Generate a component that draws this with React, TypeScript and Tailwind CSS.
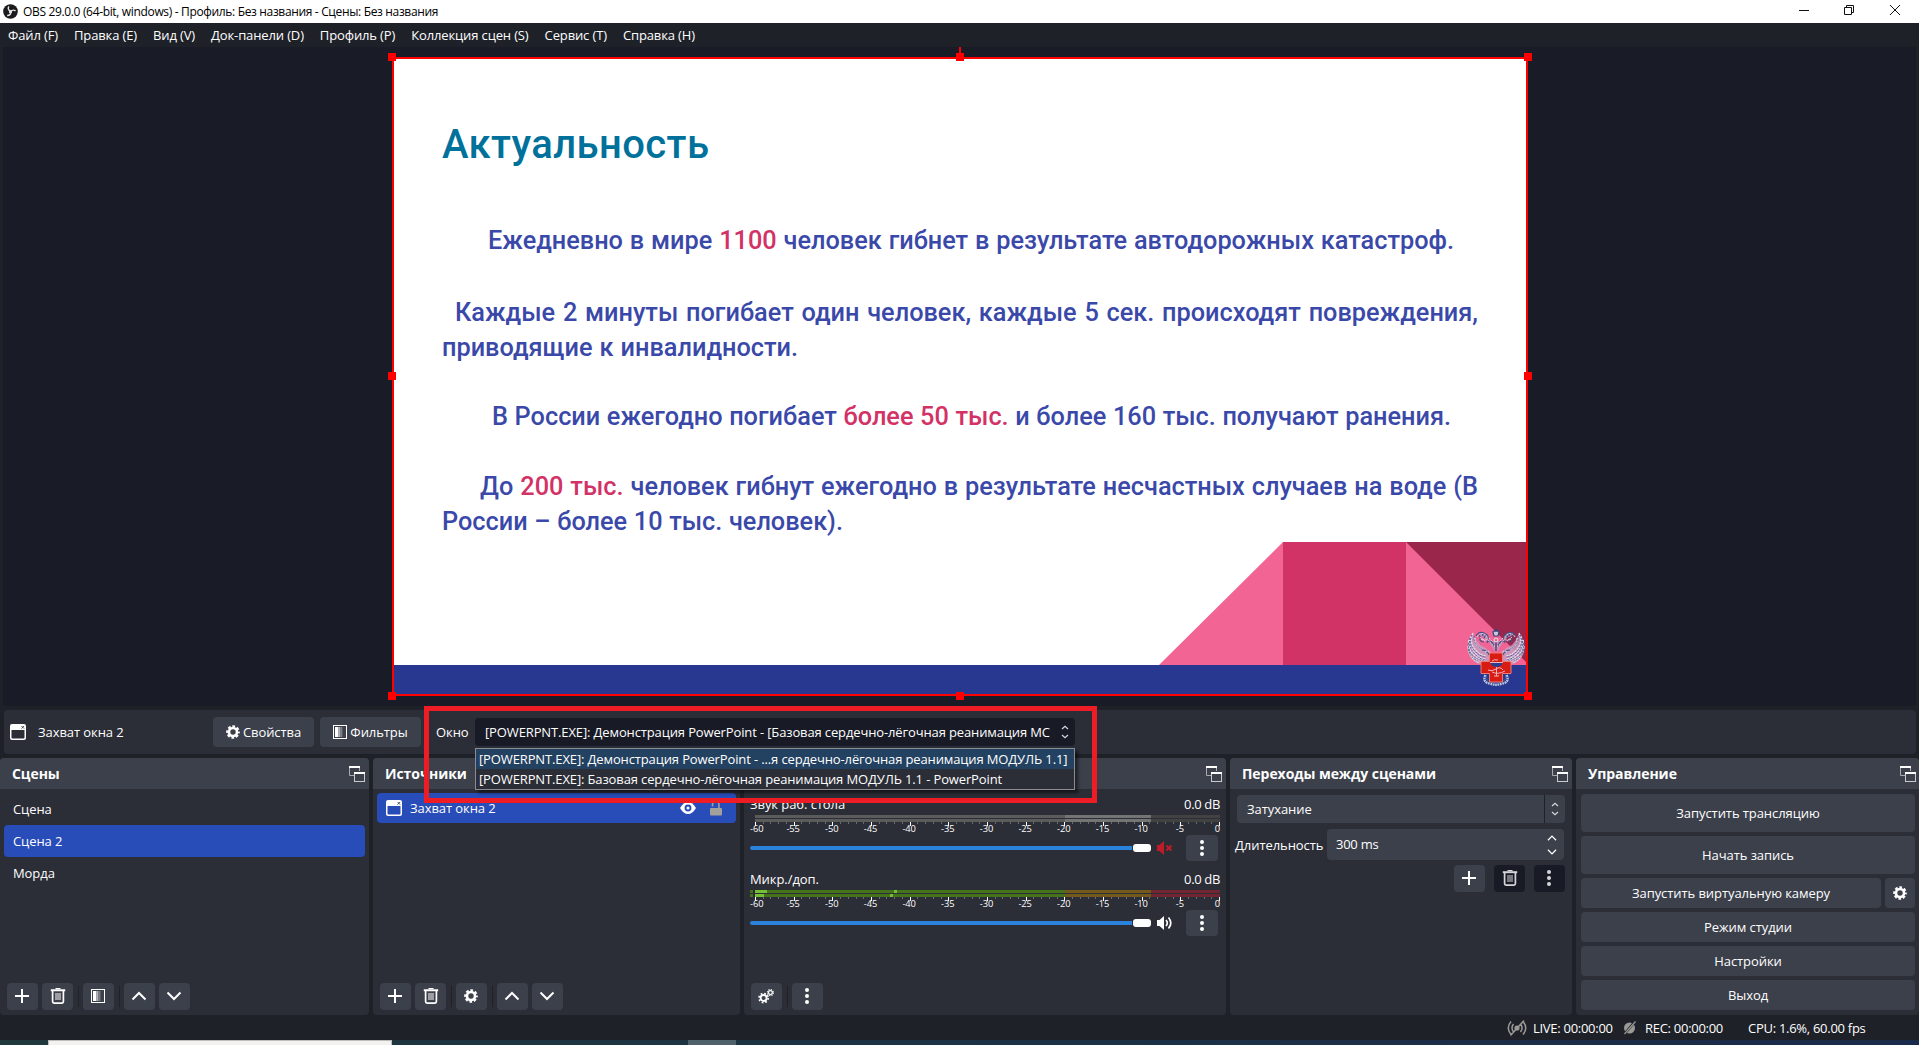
import React from "react";

type P = { className?: string };

const Gear = ({ className = "" }: P) => (
  <svg viewBox="0 0 16 16" className={className} fill="none">
    <circle cx="8" cy="8" r="4.6" stroke="#fefefe" strokeWidth="3" />
    <circle cx="8" cy="8" r="6.5" stroke="#fefefe" strokeWidth="2.6" strokeDasharray="3 2.105" strokeDashoffset="1.5" />
  </svg>
);

const Gears = () => (
  <svg viewBox="0 0 16 16" className="size-4" fill="none" stroke="#fefefe">
    <circle cx="5.6" cy="10" r="3" strokeWidth="1.8" />
    <circle cx="5.6" cy="10" r="4.6" strokeWidth="1.6" strokeDasharray="1.8 1.813" />
    <circle cx="12.4" cy="4.6" r="1.9" strokeWidth="1.2" />
    <circle cx="12.4" cy="4.6" r="3" strokeWidth="1.2" strokeDasharray="1.2 1.156" />
  </svg>
);

const Plus = () => (
  <svg viewBox="0 0 16 16" className="size-4" stroke="#fefefe" strokeWidth="2">
    <path d="M8 1v14M1 8h14" />
  </svg>
);

const Trash = () => (
  <svg viewBox="0 0 16 16" className="ml-px size-4" fill="none" stroke="currentColor">
    <path d="M0.8 2.2h14.4" strokeWidth="2" />
    <path d="M5.500 0.600h5" strokeWidth="1.2" />
    <path d="M2.600 3v10.600q0 1.500 1.500 1.500h7.800q1.500 0 1.500-1.500V3" strokeWidth="1.7" />
    <path d="M6 5v7M8 5v7M10 5v7" strokeWidth="1" />
  </svg>
);

const Filter = () => (
  <svg viewBox="0 0 14 14" className="size-3.5" fill="none">
    <rect x="0.5" y="0.5" width="13" height="13" stroke="#fefefe" />
    <rect x="2" y="2" width="3.4" height="10" fill="#fefefe" />
    <rect x="5.4" y="2" width="2" height="10" fill="#b4b5b9" />
    <rect x="7.4" y="2" width="2" height="10" fill="#7d7f87" />
  </svg>
);

const Up = ({ className = "size-4" }: P) => (
  <svg viewBox="0 0 16 16" className={className} fill="none" stroke="#fefefe" strokeWidth="2">
    <path d="M1.500 11.500 8 5l6.500 6.500" />
  </svg>
);
const Down = ({ className = "size-4" }: P) => (
  <svg viewBox="0 0 16 16" className={className} fill="none" stroke="#fefefe" strokeWidth="2">
    <path d="M1.500 4.500 8 11l6.500-6.500" />
  </svg>
);

const Dots = () => (
  <svg viewBox="0 0 16 16" className="size-4" fill="currentColor">
    <circle cx="8" cy="2" r="2" />
    <circle cx="8" cy="8" r="2" />
    <circle cx="8" cy="14" r="2" />
  </svg>
);

const WindowIcon = () => (
  <svg viewBox="0 0 16 16" className="size-4 shrink-0">
    <path fillRule="evenodd" d="M2 0h12q2 0 2 2v12q0 2-2 2H2q-2 0-2-2V2Q0 0 2 0ZM1.500 6v7.500q0 1 1 1h11q1 0 1-1V6Z" fill="#fefefe" />
    <path d="m11.500 2 2.600 2.600m0-2.600-2.600 2.600" stroke="#3c404b" strokeWidth="0.9" />
  </svg>
);

const Undock = () => (
  <svg viewBox="0 0 16 16" className="size-4" fill="none">
    <path d="M0.500 1v8.500H5M10.500 5V1" stroke="#a9abb0" />
    <path d="M0 1h11" stroke="#fefefe" strokeWidth="2" />
    <rect x="5.500" y="7" width="10" height="8.500" stroke="#c9cacd" />
    <path d="M5 7h11" stroke="#fefefe" strokeWidth="2" />
  </svg>
);

const Spin = () => (
  <svg viewBox="0 0 8 14" className="h-3.5 w-2" fill="none" stroke="#d5d6d9" strokeWidth="1.2">
    <path d="M1 4 4 1.200 7 4M1 10l3 2.800L7 10" />
  </svg>
);

const ToolBtn = ({ children, dark }: { children: React.ReactNode; dark?: boolean }) => (
  <button className={(dark ? "bg-[#181a25] text-[#d5d6d9]" : "bg-[#3c404b] text-[#fefefe]") + " flex h-[27px] w-[31px] items-center justify-center rounded pr-px pb-px"}>
    {children}
  </button>
);
const Sep = () => <div className="mx-[4.5px] h-[21px] w-px bg-[#1f2129]" />;

const Dock = ({ title, className, pad = "pr-1", children }: { title: string; className: string; pad?: string; children: React.ReactNode }) => (
  <section className={"flex h-[257px] shrink-0 flex-col overflow-hidden rounded bg-[#2b2d37] " + className}>
    <header className={"flex h-[31px] shrink-0 items-center justify-between bg-[#3c404b] pl-3 " + pad}>
      <h2 className="text-[14px] font-bold tracking-[-0.06px]">{title}</h2>
      <Undock />
    </header>
    {children}
  </section>
);

const STEP = 464 / 60;

const Meter = ({ live }: { live?: boolean }) => (
  <svg width="471" height="20" viewBox="0 0 471 20" className="block shrink-0" shapeRendering="crispEdges">
    {[0, 4].map((y) => (
      <g key={y}>
        <rect x="5" y={y} width="310" height="3" fill={live ? "#44731b" : "#5b5b5c"} />
        <rect x="315" y={y} width="86" height="3" fill={live ? "#74591d" : "#747475"} />
        <rect x="401" y={y} width="69" height="3" fill={live ? "#722533" : "#424243"} />
        {live && <rect x="0" y={y} width="3" height="3" fill="#44731b" />}
        {live && <rect x="5" y={y} width={y ? 9 : 12} height="3" fill="#74c034" />}
        {live && <rect x={y ? 140 : 144} y={y} width="3" height="3" fill="#74c034" />}
      </g>
    ))}
    {Array.from({ length: 61 }, (_, i) => (
      <rect key={i} x={Math.round(5 + i * STEP)} y="7" width="1" height={i % 5 ? 2 : 4} fill={i % 5 ? "#6b6c70" : "#fefefe"} />
    ))}
    {Array.from({ length: 13 }, (_, i) => (
      <text
        key={i}
        x={i === 0 ? 0 : i === 12 ? 470 : 4.5 + i * 5 * STEP}
        y="17"
        textAnchor={i === 0 ? "start" : i === 12 ? "end" : "middle"}
        className="fill-[#fefefe] text-[9.3px]"
      >
        {i * 5 - 60}
      </text>
    ))}
  </svg>
);

const Channel = ({ name, muted }: { name: string; muted?: boolean }) => (
  <div className="flex h-[75px] flex-col pl-1.5">
    <div className="flex h-[21px] w-[470px] items-center justify-between pb-px">
      <span>{name}</span>
      <span className="tracking-[-0.35px]">0.0 dB</span>
    </div>
    <Meter live={!muted} />
    <div className="flex h-[26px] w-[468px] items-center">
      <div className="h-1 w-[382px] rounded-l-sm bg-[#2a82da]" />
      <div className="ml-px h-2 w-[18px] rounded-[3px] bg-[#fefefe]" />
      <svg viewBox="0 0 16 16" className="ml-1.5 size-4" fill="none">
        <path d="M0 5h2.500L7 1v14l-4.500-4H0Z" fill={muted ? "#c01c28" : "#fefefe"} />
        {muted ? (
          <path d="m9.500 5.500 5 5m0-5-5 5" stroke="#c01c28" strokeWidth="2" />
        ) : (
          <path d="M9 5q2.600 3 0 6M11.500 2.500q4.600 5.500 0 11" stroke="#fefefe" strokeWidth="1.7" />
        )}
      </svg>
      <div className="grow" />
      <button className="flex h-[26px] w-8 items-center justify-center rounded bg-[#3c404b] text-[#fefefe]">
        <Dots />
      </button>
    </div>
  </div>
);

const EagleHalf = () => (
  <>
    <path d="M6 5Q0 12 1 22q1 9 11 14l9-2 3-9-3-4-8-4-4-5Z" fill="#c79cc0" fillOpacity=".85" />
    <path d="M12 7q5-5 9 1l2 8 5 8v-12l-3 2Z" fill="#b79cc0" fillOpacity=".7" />
    <path
      d="M6 5Q2 13 7 20t12 8M4 8Q1 17 7 24t12 7M2 12q-2 9 5 15t12 6M1 18q0 9 8 13t10 3M2 24q2 7 10 11M8 10q-1 6 4 9t8 6"
      stroke="#e4dcea"
      strokeWidth="1.3"
      strokeDasharray="2.4 .7"
    />
    <path
      d="M5 7Q1 15 7 22t12 7M3 10q-2 8 4 15t12 7M1.500 15q-1 9 6 14t11 4M1.500 21q1 8 9 12M7 8q-1 7 5 11t8 6"
      stroke="#4a5990"
      strokeWidth=".9"
      strokeDasharray="2 1"
    />
    <path d="M9 8q3-5 8-3t4 6l-1 4M12 7q2 2 1 4t4 3M15 4l1 4M19 6l-2 4M21 13q4 1 6 4M15 22q5 0 7 5M24 12l3 6" stroke="#3f4f86" strokeWidth="1.100" />
    <path d="M10 9q3-5 7-3t3 6M13 9q3 3 6 3t5 3 4 3M18 24q3-2 6 1M14 11l4 2M22 10l4 4" stroke="#ddd7e6" strokeWidth="1" strokeDasharray="2 .8" />
    <path d="m18 19 3-1.500 2 2-2 2ZM20 22h3" fill="#f26494" stroke="#f26494" strokeWidth=".6" />
    <path d="M18.500 47q-3 6 2 8 3 1 9 2" stroke="#b9c5dc" strokeWidth="2.400" strokeDasharray="1.800 .7" />
    <path d="M19 48q0 6 9 7" stroke="#5d74a6" strokeWidth="1" strokeDasharray="2 1" />
  </>
);

const Emblem = () => (
  <svg viewBox="0 0 58 58" className="absolute top-[571px] left-[1075px] size-[58px]" fill="none">
    <EagleHalf />
    <g transform="matrix(-1 0 0 1 58 0)">
      <EagleHalf />
    </g>
    <path d="M26 4q3-3 6 0l-1 4h-4ZM29 0v4M29 14v9" stroke="#34457a" strokeWidth="1.200" fill="#c9c8dc" />
    <circle cx="29" cy="12" r="2" fill="#f26494" stroke="#e6e3ee" />
    <path d="M22.500 25h13v8.500H44v12h-8.500V54h-13v-8.500H14v-12h8.500Z" fill="#d81c12" stroke="#ee7a78" strokeWidth="1" />
    <path d="M23.500 35h12q-1 4-6 4t-6-4" fill="#2a3e8f" />
    <path d="M23 34.500h13M29.500 39v9M27 48h5M25 33q2-2 6-1M21 42q4 2 8-1t7 1M25 44q6 3 13-1" stroke="#f0b5c0" strokeWidth="1" />
  </svg>
);

const handles = [
  "left-[-4px] top-[-4px]",
  "left-[564px] top-[-4px]",
  "left-[1132px] top-[-4px]",
  "left-[-4px] top-[315px]",
  "left-[1132px] top-[315px]",
  "left-[-4px] top-[635px]",
  "left-[564px] top-[635px]",
  "left-[1132px] top-[635px]",
];

const Red = ({ children }: { children: React.ReactNode }) => <span className="text-[#d23265]">{children}</span>;

const Slide = () => (
  <div className="relative ml-[389px] mt-2.5 h-[639px] w-[1136px] bg-white font-['Roboto'] font-medium tracking-normal">
    <div className="flex flex-col pl-[50px] pt-16 text-[25.3px] leading-[35px] text-[#3a49a9] [&>p]:[text-align-last:justify] [&>p]:whitespace-nowrap">
      <h1 className="h-12 text-[40px] leading-[48px] tracking-[0.4px] text-[#00719b]">Актуальность</h1>
      <p className="mt-[54px] ml-[46px] w-[966px]">
        Ежедневно в мире <Red>1100</Red> человек гибнет в результате автодорожных катастроф.
      </p>
      <p className="mt-[37px] ml-[13px] w-[1023px]">Каждые 2 минуты погибает один человек, каждые 5 сек. происходят повреждения,</p>
      <p className="w-[356px]">приводящие к инвалидности.</p>
      <p className="mt-[34px] ml-[50px] w-[959px]">
        В России ежегодно погибает <Red>более 50 тыс.</Red> и более 160 тыс. получают ранения.
      </p>
      <p className="mt-[35px] ml-[38px] w-[998px]">
        До <Red>200 тыс.</Red> человек гибнут ежегодно в результате несчастных случаев на воде (В
      </p>
      <p className="w-[401px]">России – более 10 тыс. человек).</p>
    </div>
    <svg viewBox="0 0 1136 154" className="absolute bottom-0 left-0 h-[154px] w-[1136px]">
      <path d="M767 123 891 0v123Z" fill="#f26494" />
      <path d="M891 0h123v123H891Z" fill="#d13366" />
      <path d="M1014 0h122v123h-122Z" fill="#f26494" />
      <path d="M1014 0h122v122Z" fill="#9b264c" />
      <path d="M0 123h1136v31H0Z" fill="#283891" />
    </svg>
    <Emblem />
    <div className="absolute inset-0 border-2 border-[#ff0000]" />
    <div className="absolute left-[567px] top-[-10px] h-2.5 w-0.5 bg-[#ff0000]" />
    {handles.map((h) => (
      <div key={h} className={"absolute size-2 bg-[#ff0000] " + h} />
    ))}
  </div>
);

const CtlBtn = ({ label, className }: { label: string; className: string }) => (
  <button className={"flex items-center justify-center rounded bg-[#3c404b] " + className}>{label}</button>
);

export default function App() {
  return (
    <div className="relative flex h-[1045px] w-[1919px] flex-col overflow-hidden bg-[#1f2129] font-['Open_Sans',sans-serif] text-[13px] leading-[18px] tracking-[-0.07px] text-[#fefefe]">
      <div className="flex h-[23px] shrink-0 items-center bg-white pl-[3px] text-[12px] text-black">
        <svg viewBox="0 0 16 16" className="size-[15px]">
          <circle cx="8" cy="8" r="7.8" fill="#1b1b1d" />
          <g fill="none" stroke="#e6e6e8" strokeWidth="1.5">
            <path d="M6.200 2.600q-1.800 3.600 1.800 5.100" />
            <path d="M13.400 7.200q-3.500-1.800-5.200 1.200" />
            <path d="M4.400 12.300q3.700.2 4-3.600" />
          </g>
          <circle cx="8" cy="8.200" r="1.700" fill="#e6e6e8" />
        </svg>
        <span className="ml-[5px] tracking-[-0.34px]">OBS 29.0.0 (64-bit, windows) - Профиль: Без названия - Сцены: Без названия</span>
        <div className="grow" />
        <svg viewBox="0 0 104 13" className="mr-[18px] h-[13px] w-[104px]" fill="none" stroke="#111">
          <path d="M2 5.500h10M47.500 2.500h7v7h-7zM49.500 2.500v-2h7v7h-2M93 0l10 10M103 0 93 10" />
        </svg>
      </div>
      <nav className="flex h-6 shrink-0 items-center gap-4 pl-2 pb-px">
        {["Файл (F)", "Правка (E)", "Вид (V)", "Док-панели (D)", "Профиль (P)", "Коллекция сцен (S)", "Сервис (T)", "Справка (H)"].map((m) => (
          <span key={m} className="tracking-[-0.13px]">{m}</span>
        ))}
      </nav>

      <main className="mx-[3px] h-[659px] shrink-0 bg-[#191b26]">
        <Slide />
      </main>

      <div className="relative z-10 mt-1 ml-1 mr-[3px] flex h-11 shrink-0 items-center rounded bg-[#2b2d37] pl-1.5">
        <WindowIcon />
        <span className="ml-3 w-[175px]">Захват окна 2</span>
        <button className="flex h-[30px] w-[101px] items-center justify-center gap-[3px] rounded bg-[#3c404b]">
          <Gear className="size-3.5" />
          Свойства
        </button>
        <button className="ml-1.5 flex h-[30px] w-[101px] items-center justify-center gap-[3px] rounded bg-[#3c404b]">
          <Filter />
          Фильтры
        </button>
        <span className="ml-[15px] w-[39px]">Окно</span>
        <div className="relative h-7 w-[600px] rounded bg-[#181a25] tracking-[-0.13px]">
          <div className="flex h-full items-center justify-between pl-2.5 pr-1.5">
            <span className="w-[566px] overflow-hidden whitespace-nowrap">[POWERPNT.EXE]: Демонстрация PowerPoint - [Базовая сердечно-лёгочная реанимация МС</span>
            <Spin />
          </div>
          <div className="absolute left-0 top-[30px] h-[42px] w-[600px] border border-[#8b8c90] bg-[#2b2d37] whitespace-nowrap shadow-[3px_3px_3px_rgba(0,0,0,0.5)]">
            <div className="flex h-5 items-center bg-[#234160] pl-[3px]">[POWERPNT.EXE]: Демонстрация PowerPoint - ...я сердечно-лёгочная реанимация МОДУЛЬ 1.1]</div>
            <div className="flex h-5 items-center pl-[3px]">[POWERPNT.EXE]: Базовая сердечно-лёгочная реанимация МОДУЛЬ 1.1 - PowerPoint</div>
          </div>
        </div>
        <div className="pointer-events-none absolute left-[420px] top-[-4px] h-[97px] w-[673px] border-5 border-[#ee1c24]" />
      </div>

      <div className="mt-1 flex h-[257px] shrink-0 gap-1">
        <Dock title="Сцены" className="w-[369px]">
          <ul className="grow pt-1 px-1">
            {["Сцена", "Сцена 2", "Морда"].map((s, i) => (
              <li key={s} className={"flex h-8 w-[361px] items-center rounded pl-[9px] " + (i === 1 ? "bg-[#284cb8]" : "")}>
                {s}
              </li>
            ))}
          </ul>
          <div className="mb-[5px] flex items-center pl-[7px]">
            <ToolBtn><Plus /></ToolBtn>
            <div className="w-1" />
            <ToolBtn><Trash /></ToolBtn>
            <Sep />
            <ToolBtn><Filter /></ToolBtn>
            <Sep />
            <ToolBtn><Up className="size-4" /></ToolBtn>
            <div className="w-1" />
            <ToolBtn><Down className="size-4" /></ToolBtn>
          </div>
        </Dock>

        <Dock title="Источники" className="w-[367px]">
          <div className="grow px-1 pt-1">
            <div className="flex h-[30px] items-center rounded bg-[#284cb8] pl-[9px] pr-3.5">
              <WindowIcon />
              <span className="ml-2 grow">Захват окна 2</span>
              <svg viewBox="0 0 16 16" className="size-4">
                <path d="M0 8q3.500-6 8-6T16 8q-3.500 6-8 6T0 8Z" fill="#fefefe" />
                <circle cx="8" cy="8" r="3.400" fill="#284cb8" />
                <circle cx="8" cy="8" r="1.500" fill="#fefefe" />
              </svg>
              <svg viewBox="0 0 12 16" className="ml-3.5 h-4 w-3">
                <rect x="0" y="8" width="12" height="7.500" rx="1" fill="#a4a19c" />
                <path d="M2.500 6.500V4.500a3.200 3.200 0 0 1 6.400 0V8" stroke="#a4a19c" strokeWidth="1.600" fill="none" />
              </svg>
            </div>
          </div>
          <div className="mb-[5px] flex items-center pl-[7px]">
            <ToolBtn><Plus /></ToolBtn>
            <div className="w-1" />
            <ToolBtn><Trash /></ToolBtn>
            <Sep />
            <ToolBtn><Gear className="size-3.5" /></ToolBtn>
            <Sep />
            <ToolBtn><Up className="size-4" /></ToolBtn>
            <div className="w-1" />
            <ToolBtn><Down className="size-4" /></ToolBtn>
          </div>
        </Dock>

        <section className="flex w-[482px] shrink-0 flex-col overflow-hidden rounded bg-[#2b2d37]">
          <header className="flex h-[31px] shrink-0 items-center justify-end bg-[#3c404b] pr-1">
            <Undock />
          </header>
          <div className="grow pt-[5px]">
            <Channel name="Звук раб. стола" muted />
            <Channel name="Микр./доп." />
          </div>
          <div className="mb-[5px] flex items-center pl-[7px]">
            <ToolBtn><Gears /></ToolBtn>
            <Sep />
            <ToolBtn><Dots /></ToolBtn>
          </div>
        </section>

        <Dock title="Переходы между сценами" className="w-[342px]">
          <div className="pl-[7px] pt-1.5">
            <div className="flex h-7 w-[328px] items-center rounded bg-[#3c404b] pl-2.5">
              <span className="grow">Затухание</span>
              <div className="flex h-full w-[21px] items-center justify-center border-l border-[#1f2129]">
                <Spin />
              </div>
            </div>
            <div className="mt-1.5 flex items-center">
              <span className="ml-[-2px] w-[92px] shrink-0">Длительность</span>
              <div className="flex h-[31px] w-[237px] items-center justify-between rounded bg-[#3c404b] pl-[9px] pr-[7px]">
                <span className="pb-px tracking-[-0.25px]">300 ms</span>
                <div className="flex flex-col items-center gap-1">
                  <Up className="size-2.5" />
                  <Down className="size-2.5" />
                </div>
              </div>
            </div>
            <div className="mt-[5px] flex w-[328px] justify-end gap-2.25">
              <ToolBtn><Plus /></ToolBtn>
              <ToolBtn dark><Trash /></ToolBtn>
              <ToolBtn dark><Dots /></ToolBtn>
            </div>
          </div>
        </Dock>

        <Dock title="Управление" className="w-[343px]" pad="pr-[3px]">
          <div className="flex flex-col gap-1 pl-[5px] pr-1 pt-[5px]">
            <CtlBtn label="Запустить трансляцию" className="h-[38px]" />
            <CtlBtn label="Начать запись" className="h-[38px]" />
            <div className="flex gap-1">
              <CtlBtn label="Запустить виртуальную камеру" className="h-[30px] grow" />
              <button className="flex h-[30px] w-[30px] items-center justify-center rounded bg-[#3c404b]">
                <Gear className="size-3.5" />
              </button>
            </div>
            <CtlBtn label="Режим студии" className="h-[30px]" />
            <CtlBtn label="Настройки" className="h-[30px]" />
            <CtlBtn label="Выход" className="h-[30px]" />
          </div>
        </Dock>
      </div>

      <footer className="flex h-[25px] shrink-0 items-center pl-[1507px] tracking-[-0.28px] whitespace-nowrap">
        <svg viewBox="0 0 20 16" className="h-4 w-5" fill="none" stroke="#9a9996" strokeWidth="1.500">
          <path d="M4 1.500Q-1.500 8 4 14.500M6.500 4Q3.500 8 6.500 12M16 1.500q5.500 6.500 0 13M13.500 4q3 4 0 8M3.500 15.500 17 .5" />
          <circle cx="10" cy="8" r="2.600" fill="#9a9996" stroke="none" />
        </svg>
        <span className="ml-1.5 w-[90px]">LIVE: 00:00:00</span>
        <svg viewBox="0 0 14 14" className="size-3.5" fill="none">
          <circle cx="6.500" cy="7" r="5.500" fill="#9a9996" />
          <path d="m1 13.500 11-13" stroke="#1f2129" strokeWidth="2.500" />
          <path d="m1.500 13 11-12.500" stroke="#9a9996" strokeWidth="1.200" />
        </svg>
        <span className="ml-2 w-[103px] tracking-[-0.28px]">REC: 00:00:00</span>
        <span>CPU: 1.6%, 60.00 fps</span>
      </footer>

      <div className="flex h-[5px] shrink-0 bg-linear-to-r from-[#20383c] to-[#1a2a4a]">
        <div className="ml-12 w-[344px] border border-b-0 border-[#bdbdbd] bg-[#f3f2f1]" />
        <div className="ml-[296px] w-12 bg-[#4f626c]" />
      </div>
    </div>
  );
}
